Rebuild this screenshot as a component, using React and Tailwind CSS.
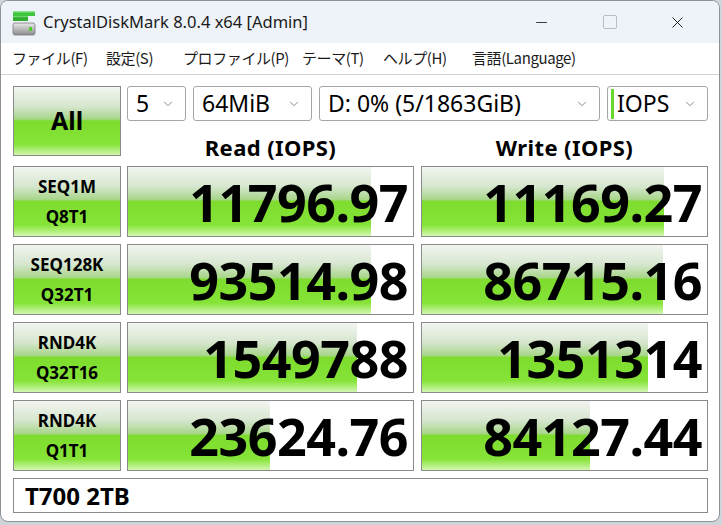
import { ChevronDown, Minus, X } from "lucide-react"

const rows = [
  { l1: "SEQ1M", l2: "Q8T1", read: "11796.97", rp: 85.3, write: "11169.27", wp: 85 },
  { l1: "SEQ128K", l2: "Q32T1", read: "93514.98", rp: 85.3, write: "86715.16", wp: 84.6 },
  { l1: "RND4K", l2: "Q32T16", read: "1549788", rp: 80.4, write: "1351314", wp: 79.3 },
  { l1: "RND4K", l2: "Q1T1", read: "23624.76", rp: 49.8, write: "84127.44", wp: 59 },
]

// menu items with the slot width each one takes in the bar
const menus = [
  { t: "ファイル(F)", w: "w-[94px]" },
  { t: "設定(S)", w: "w-[77px]" },
  { t: "プロファイル(P)", w: "w-[119px]" },
  { t: "テーマ(T)", w: "w-[81px]" },
  { t: "ヘルプ(H)", w: "w-[89px]" },
  { t: "言語(Language)", w: "w-[130px]" },
]

const green =
  "bg-[linear-gradient(to_bottom,#f2f5f0_0%,#d6e6cf_28%,#a8d68a_47%,#7edc2e_50%,#86e438_84%,#d2f7b0_100%)]"

function AppIcon() {
  return (
    <svg width="24" height="26" viewBox="0 0 24 26">
      <defs>
        <linearGradient id="body" x1="0" y1="0" x2="0" y2="1">
          <stop offset="0" stopColor="#e8e8e8" />
          <stop offset="1" stopColor="#8c8c8c" />
        </linearGradient>
      </defs>
      <rect x="1" y="1" width="22" height="5" fill="#3fc43f" />
      <rect x="1" y="1" width="22" height="1.5" fill="#8be28b" />
      <rect x="1" y="6" width="15" height="5" fill="#2fae2f" />
      <rect x="1" y="6" width="15" height="1.2" fill="#6fd36f" />
      <rect x="1" y="13" width="22" height="12" rx="2" fill="url(#body)" stroke="#7a7a7a" strokeWidth="0.8" />
      <rect x="17" y="17" width="3" height="4" fill="#4ccf2a" />
    </svg>
  )
}

function Select({ w, children, bar }) {
  return (
    <div
      className={`${w} h-[35px] bg-white border border-[#a6a6a6] rounded-[3px] flex items-center pl-[8px] pr-[10px] text-[23px] leading-none text-black`}
    >
      {bar && <div className="w-[3px] h-[30px] bg-[#6ad72a] mr-[3px] -ml-[5px]" />}
      <span className="flex-1 whitespace-nowrap">{children}</span>
      <ChevronDown className="w-[14px] h-[14px] text-[#6a6a6a]" strokeWidth={1.3} />
    </div>
  )
}

function Value({ text, pct }) {
  return (
    <div
      className={`h-[71px] bg-white ${green} bg-no-repeat border border-[#8a8a8a] flex items-center justify-end pr-[5px]`}
      style={{ backgroundSize: `${pct}% 100%` }}
    >
      <span className="text-[52px] font-bold tracking-[-0.5px] leading-none text-black">{text}</span>
    </div>
  )
}

export default function App() {
  return (
    <div className="w-[722px] h-[525px] bg-[#cfd4da] font-['Segoe_UI','Noto_Sans','Noto_Sans_CJK_JP',sans-serif]">
      <div className="w-[720px] h-[522px] bg-white border border-[#8d9297] rounded-[8px] overflow-hidden flex flex-col">
        {/* title bar */}
        <div className="h-[42px] bg-[#eef3f9] flex items-center shrink-0">
          <div className="ml-[11px] mt-[1px]">
            <AppIcon />
          </div>
          <span className="ml-[7px] text-[16.5px] text-[#1a1a1a] whitespace-nowrap">
            CrystalDiskMark 8.0.4 x64 [Admin]
          </span>
          <div className="flex-1" />
          <div className="w-[46px] flex justify-center">
            <Minus className="w-[17px] h-[17px] text-[#1a1a1a]" strokeWidth={1.2} />
          </div>
          <div className="w-[68px] flex justify-center ml-[12px]">
            <div className="w-[14px] h-[14px] border border-[#bdbdbd] rounded-[2px]" />
          </div>
          <div className="w-[46px] flex justify-center ml-[10px] mr-[19px]">
            <X className="w-[19px] h-[19px] text-[#1a1a1a]" strokeWidth={1.2} />
          </div>
        </div>

        {/* menu bar */}
        <div className="h-[32px] bg-white border-b border-[#d4d4d4] flex items-center pl-[11px] shrink-0 font-['Noto_Sans_CJK_JP','Noto_Sans',sans-serif] text-[15px] tracking-[-0.4px] text-[#1a1a1a]">
          {menus.map((m) => (
            <span key={m.t} className={`${m.w} whitespace-nowrap`}>
              {m.t}
            </span>
          ))}
        </div>

        {/* main panel */}
        <div className="pl-[12px] pt-[11px] flex flex-col gap-[7px]">
          <div className="flex gap-[6px]">
            <div
              className={`w-[108px] h-[70px] ${green} border border-[#8a8a8a] flex items-center justify-center text-[25px] font-bold text-black`}
            >
              All
            </div>
            <div className="w-[581px] flex flex-col">
              <div className="flex gap-[7px]">
                <Select w="w-[59px]">5</Select>
                <Select w="w-[119px]">64MiB</Select>
                <Select w="w-[281px]">D: 0% (5/1863GiB)</Select>
                <Select w="w-[101px]" bar>
                  IOPS
                </Select>
              </div>
              <div className="flex gap-[7px] pt-[14px] text-[22px] tracking-[0.4px] leading-[24px] font-bold text-black">
                <div className="w-[287px] text-center">Read (IOPS)</div>
                <div className="w-[287px] text-center">Write (IOPS)</div>
              </div>
            </div>
          </div>

          {rows.map((r, i) => (
            <div key={i} className="flex gap-[6px]">
              <div
                className={`w-[108px] h-[71px] ${green} border border-[#8a8a8a] flex flex-col items-center justify-center text-[17px] leading-[30px] font-bold text-black`}
              >
                <span>{r.l1}</span>
                <span>{r.l2}</span>
              </div>
              <div className="w-[287px]">
                <Value text={r.read} pct={r.rp} />
              </div>
              <div className="w-[287px] ml-[1px]">
                <Value text={r.write} pct={r.wp} />
              </div>
            </div>
          ))}

          <div className="w-[695px] h-[35px] bg-white border border-[#8a8a8a] flex items-center pl-[11px] text-[24px] font-bold text-black">
            T700 2TB
          </div>
        </div>
      </div>
    </div>
  )
}
